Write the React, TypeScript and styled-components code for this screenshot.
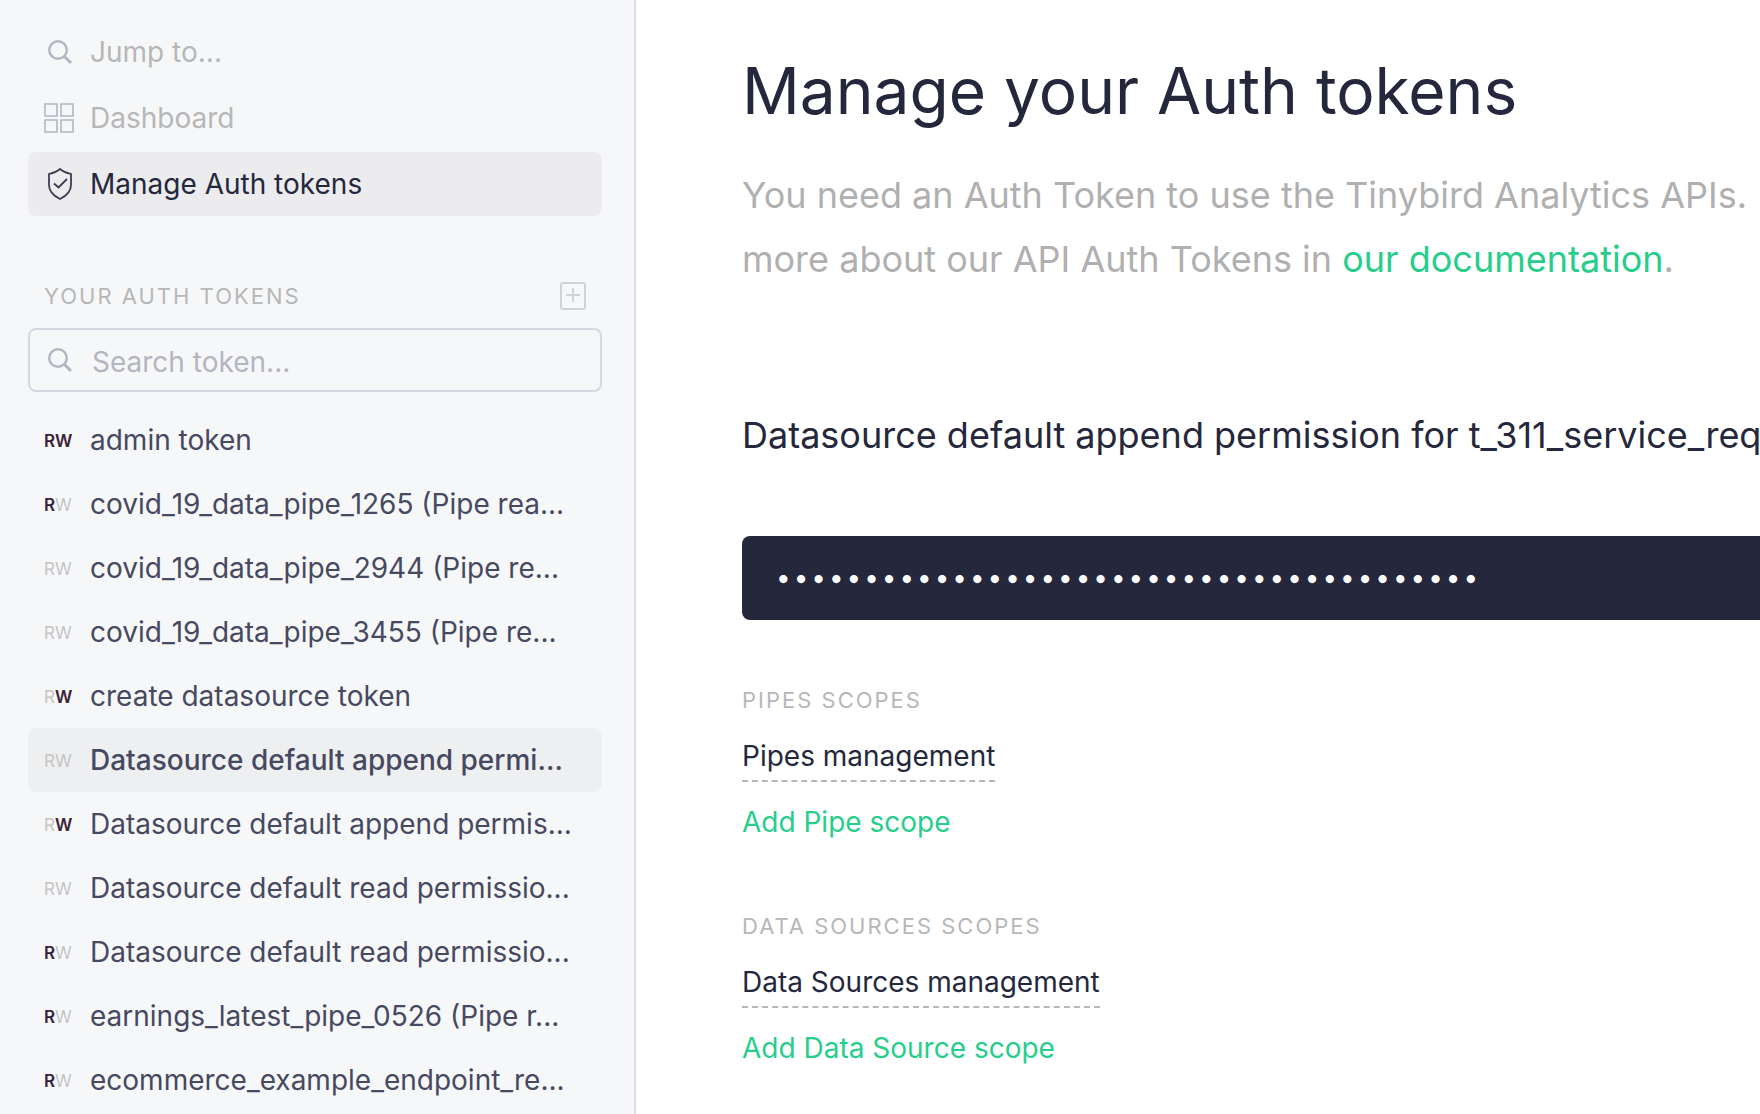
import React from 'react';
import styled, { createGlobalStyle } from 'styled-components';

const GlobalStyle = createGlobalStyle`
  *, *::before, *::after { box-sizing: border-box; }
  body { margin: 0; background: #fff; color: #25283d; font-family: Inter, "Liberation Sans", sans-serif; overflow: hidden; }
  button, input { font: inherit; color: inherit; }
  a { color: #27ce8b; text-decoration: none; }
`;

const Page = styled.div`
  display: flex;
  height: 100vh;
  overflow: hidden;
`;

const Sidebar = styled.aside`
  flex: none;
  width: 636px;
  padding: 20px 32px 0 28px;
  background: #f6f7f9;
  border-right: 2px solid #dcdce3;
`;

const Nav = styled.nav`
  display: flex;
  flex-direction: column;
  gap: 2px;
`;

const NavItem = styled.a<{ $active?: boolean }>`
  display: flex;
  align-items: center;
  gap: 16px;
  height: 64px;
  padding: 0 16px;
  border-radius: 8px;
  font-size: 28px;
  line-height: 32px;
  color: ${(p) => (p.$active ? '#25283d' : '#b7b7b7')};
  background: ${(p) => (p.$active ? '#ececee' : 'transparent')};

  svg { flex: none; color: ${(p) => (p.$active ? '#3a3d52' : '#b5b5c3')}; }
`;

const ListHeader = styled.div`
  display: flex;
  align-items: center;
  justify-content: space-between;
  margin-top: 64px;
  padding: 0 16px;
  height: 32px;
`;

const Caption = styled.h2`
  margin: 0;
  font-size: 22px;
  line-height: 32px;
  font-weight: 400;
  letter-spacing: 2px;
  text-transform: uppercase;
  color: #b7b7b7;
`;

const AddButton = styled.button`
  display: flex;
  padding: 0;
  border: 0;
  background: none;
  color: #d2d3d8;
  cursor: pointer;
`;

const SearchBox = styled.label`
  display: flex;
  align-items: center;
  gap: 18px;
  height: 64px;
  margin-top: 16px;
  padding: 0 14px;
  border: 2px solid #d6d8e0;
  border-radius: 8px;
  color: #b5b5c3;
`;

const SearchInput = styled.input`
  flex: 1;
  min-width: 0;
  padding: 4px 0 0;
  border: 0;
  outline: 0;
  background: transparent;
  font-size: 28px;
  line-height: 32px;
  &::placeholder { color: #b5b5bf; opacity: 1; }
`;

const TokenList = styled.ul`
  margin: 16px 0 0;
  padding: 0;
  list-style: none;
`;

const TokenLink = styled.a<{ $selected?: boolean }>`
  display: flex;
  align-items: center;
  gap: 18px;
  height: 64px;
  padding: 0 16px;
  border-radius: 8px;
  font-size: 28px;
  line-height: 32px;
  font-weight: ${(p) => (p.$selected ? 500 : 400)};
  color: #464960;
  background: ${(p) => (p.$selected ? '#eeeff1' : 'transparent')};
  white-space: nowrap;
`;

const Badge = styled.span`
  flex: none;
  width: 28px;
  padding-top: 2px;
  font-size: 17px;
  line-height: 32px;
`;

const Flag = styled.span<{ $on: boolean }>`
  font-weight: ${(p) => (p.$on ? 600 : 400)};
  color: ${(p) => (p.$on ? '#3a2038' : '#c4c4c4')};
`;

const Main = styled.main`
  flex: 1;
  min-width: 0;
  padding: 55px 0 0 106px;
  overflow: hidden;
`;

const Content = styled.div`
  min-width: 1160px;
`;

const Title = styled.h1`
  margin: 0;
  font-size: 64px;
  line-height: 72px;
  font-weight: 400;
`;

const Intro = styled.p`
  margin: 36px 0 0;
  font-size: 36px;
  line-height: 64px;
  color: #b0b0b0;
`;

const TokenName = styled.h2`
  margin: 112px 0 0;
  font-size: 36px;
  line-height: 64px;
  font-weight: 400;
`;

const Secret = styled.div`
  display: flex;
  align-items: center;
  height: 84px;
  margin-top: 69px;
  padding: 0 34px;
  border-radius: 8px;
  background: #25283d;
  color: #fff;
  font-size: 26px;
  line-height: 32px;
  letter-spacing: 3px;
`;

const Scope = styled.section`
  display: flex;
  flex-direction: column;
  align-items: flex-start;
  margin-top: 64px;
  padding-bottom: 8px;
`;

const ScopeLink = styled.a`
  margin-top: 24px;
  padding-bottom: 8px;
  border-bottom: 2px dashed #b7b7b7;
  font-size: 28px;
  line-height: 32px;
  color: #25283d;
`;

const ScopeAdd = styled.button`
  margin-top: 24px;
  padding: 0;
  border: 0;
  background: none;
  font-size: 28px;
  line-height: 32px;
  color: #27ce8b;
  cursor: pointer;
`;

const SearchIcon = () => (
  <svg width="30" height="30" viewBox="0 0 30 30" fill="none" stroke="currentColor" strokeWidth="2.4" aria-hidden="true">
    <circle cx="14" cy="13" r="8.8" />
    <path d="M20 19l7 7" strokeWidth="3" />
  </svg>
);

const GridIcon = () => (
  <svg width="30" height="30" viewBox="0 0 30 30" fill="none" stroke="currentColor" strokeWidth="1.6" aria-hidden="true">
    <path d="M1 1h12v12H1zM17 1h12v12H17zM1 17h12v12H1zM17 17h12v12H17z" />
  </svg>
);

const ShieldIcon = () => (
  <svg width="30" height="32" viewBox="0 0 30 32" fill="none" stroke="currentColor" strokeWidth="1.8" aria-hidden="true">
    <path d="M16 1c3 2.600 7 4 11 5v11c0 6-5 11-11 14C10 28 5 23 5 17V6c4-1 8-2.400 11-5z" />
    <path d="M10 15.500l4.500 4 8.500-8.500" />
  </svg>
);

const PlusBoxIcon = () => (
  <svg width="26" height="28" viewBox="0 0 26 28" fill="none" stroke="currentColor" strokeWidth="2" aria-hidden="true">
    <rect x="1" y="1" width="24" height="26" rx="2" />
    <path d="M6 13h14M13 6v14" />
  </svg>
);

type Token = { name: string; read?: boolean; write?: boolean; selected?: boolean };

const tokens: Token[] = [
  { name: 'admin token', read: true, write: true },
  { name: 'covid_19_data_pipe_1265 (Pipe rea...', read: true },
  { name: 'covid_19_data_pipe_2944 (Pipe re...' },
  { name: 'covid_19_data_pipe_3455 (Pipe re...' },
  { name: 'create datasource token', write: true },
  { name: 'Datasource default append permi...', selected: true },
  { name: 'Datasource default append permis...', write: true },
  { name: 'Datasource default read permissio...' },
  { name: 'Datasource default read permissio...', read: true },
  { name: 'earnings_latest_pipe_0526 (Pipe r...', read: true },
  { name: 'ecommerce_example_endpoint_re...', read: true },
];

const scopes = [
  { title: 'Pipes scopes', link: 'Pipes management', add: 'Add Pipe scope' },
  { title: 'Data Sources scopes', link: 'Data Sources management', add: 'Add Data Source scope' },
];

export default function App() {
  return (
    <>
      <GlobalStyle />
      <Page>
        <Sidebar>
          <Nav>
            <NavItem href="#jump"><SearchIcon />Jump to...</NavItem>
            <NavItem href="#dashboard"><GridIcon />Dashboard</NavItem>
            <NavItem href="#tokens" $active><ShieldIcon />Manage Auth tokens</NavItem>
          </Nav>
          <ListHeader>
            <Caption>Your auth tokens</Caption>
            <AddButton type="button" aria-label="Add token"><PlusBoxIcon /></AddButton>
          </ListHeader>
          <SearchBox>
            <SearchIcon />
            <SearchInput type="text" placeholder="Search token..." aria-label="Search token" />
          </SearchBox>
          <TokenList>
            {tokens.map((t, i) => (
              <li key={i}>
                <TokenLink href="#token" $selected={t.selected}>
                  <Badge><Flag $on={!!t.read}>R</Flag><Flag $on={!!t.write}>W</Flag></Badge>
                  {t.name}
                </TokenLink>
              </li>
            ))}
          </TokenList>
        </Sidebar>
        <Main>
          <Content>
            <Title>Manage your Auth tokens</Title>
            <Intro>
              You need an Auth Token to use the Tinybird Analytics APIs. Learn<br />
              more about our API Auth Tokens in <a href="#docs">our documentation</a>.
            </Intro>
            <TokenName>Datasource default append permission for t_311_service_requests</TokenName>
            <Secret>{'•'.repeat(40)}</Secret>
            {scopes.map((s) => (
              <Scope key={s.title}>
                <Caption>{s.title}</Caption>
                <ScopeLink href="#scope">{s.link}</ScopeLink>
                <ScopeAdd type="button">{s.add}</ScopeAdd>
              </Scope>
            ))}
          </Content>
        </Main>
      </Page>
    </>
  );
}
